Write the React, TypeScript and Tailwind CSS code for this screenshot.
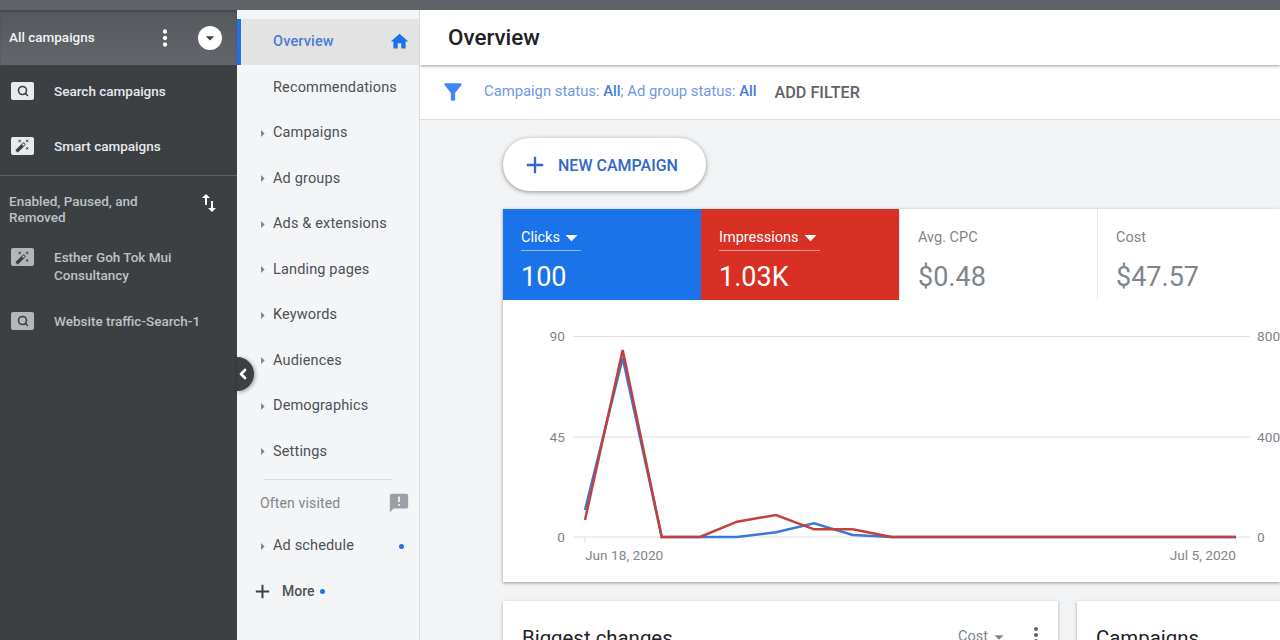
import {
  MdAutoFixHigh,
  MdHome,
  MdFilterAlt,
  MdAnnouncement,
  MdArrowDropDown,
  MdMoreVert,
  MdAdd,
  MdSwapVert,
  MdArrowRight,
} from "react-icons/md";
import { ChevronLeft, Search } from "lucide-react";

const navItems = [
  "Campaigns",
  "Ad groups",
  "Ads & extensions",
  "Landing pages",
  "Keywords",
  "Audiences",
  "Demographics",
  "Settings",
];

function TypeBadge({ wand, dim }: { wand?: boolean; dim?: boolean }) {
  return (
    <span
      className={`w-[23px] h-[18px] rounded-[2px] flex items-center justify-center shrink-0 text-[#3c4043] ${
        dim ? "bg-[#b4b6b9]" : "bg-[#e8eaed]"
      }`}
    >
      {wand ? <MdAutoFixHigh size={15} /> : <Search size={12} strokeWidth={3.2} />}
    </span>
  );
}

function CampaignRow({ label, wand, dim }: { label: string; wand?: boolean; dim?: boolean }) {
  return (
    <div className="h-[55px] flex items-center pl-[11px] gap-[20px] pb-[4px]">
      <TypeBadge wand={wand} dim={dim} />
      <span
        className={`text-[13.5px] leading-[18px] font-medium w-[150px] ${
          dim ? "text-[#bdc1c6]" : "text-[#e8eaed]"
        }`}
      >
        {label}
      </span>
    </div>
  );
}

function Sidebar() {
  return (
    <aside className="w-[237px] shrink-0 bg-[#3c4043]">
      <div className="h-[55px] bg-gradient-to-b from-[#55585d] to-[#63666b] flex items-center pl-[9px] pr-[15px] shadow-[inset_0_2px_2px_rgba(0,0,0,0.2)]">
        <span className="text-[13.5px] font-medium text-[#f1f3f4] flex-1">All campaigns</span>
        <MdMoreVert size={26} className="text-white mr-[20px]" />
        <span className="w-6 h-6 rounded-full bg-white flex items-center justify-center text-[#3c4043]">
          <MdArrowDropDown size={20} />
        </span>
      </div>
      <CampaignRow label="Search campaigns" />
      <CampaignRow label="Smart campaigns" wand />
      <div className="h-px bg-[#5f6368]" />
      <div className="flex justify-between pl-[9px] pr-[16px] pt-[17px]">
        <span className="text-[13.5px] leading-4 font-medium text-[#bdc1c6] w-[150px]">
          Enabled, Paused, and Removed
        </span>
        <MdSwapVert size={24} className="text-white -mt-[2px]" />
      </div>
      <div className="flex items-start pl-[11px] gap-[20px] mt-[23px]">
        <TypeBadge wand dim />
        <span className="text-[13.5px] leading-[18px] font-medium w-[150px] text-[#bdc1c6]">
          Esther Goh Tok Mui Consultancy
        </span>
      </div>
      <div className="mt-[11px]">
        <CampaignRow label="Website traffic-Search-1" dim />
      </div>
    </aside>
  );
}

function NavRow({ label, dot }: { label: string; dot?: boolean }) {
  return (
    <div className="h-[45.5px] flex items-center pl-[17px] pr-[15px] pt-[1px] text-[#4d5156]">
      <MdArrowRight size={17} className="text-[#80868b] mr-[2px] shrink-0" />
      <span className="text-[14.5px] tracking-[0.15px] flex-1">{label}</span>
      {dot && <span className="w-[5px] h-[5px] rounded-full bg-[#1a73e8]" />}
    </div>
  );
}

function NavColumn() {
  return (
    <nav className="w-[183px] shrink-0 bg-[#f4f5f6] border-r border-[#dadce0] pt-[9px]">
      <div className="h-[45.5px] bg-[#e3e3e3] border-l-[4px] border-[#1a73e8] flex items-center pl-[32px] pr-[9px]">
        <span className="text-[14.5px] tracking-[0.15px] font-medium text-[#4a7bd8] flex-1">Overview</span>
        <MdHome size={21} className="text-[#1a73e8]" />
      </div>
      <div className="h-[45.5px] flex items-center pl-[36px] pt-[1px] text-[14.5px] tracking-[0.15px] text-[#4d5156]">
        Recommendations
      </div>
      {navItems.map((item) => (
        <NavRow key={item} label={item} />
      ))}
      <div className="h-px bg-[#dadce0] mx-[27px] mt-[5px]" />
      <div className="flex items-center pl-[23px] pr-[9px] mt-[11px] h-[24px]">
        <span className="text-[14px] tracking-[0.15px] text-[#80868b] flex-1">Often visited</span>
        <MdAnnouncement size={22} className="text-[#9aa0a6]" />
      </div>
      <div className="mt-[8px]">
        <NavRow label="Ad schedule" dot />
      </div>
      <div className="h-[45px] flex items-center pl-[14px] text-[#3c4043]">
        <MdAdd size={23} className="mr-[8px]" />
        <span className="text-[14px] font-medium text-[#4d5156]">More</span>
        <span className="w-[5px] h-[5px] rounded-full bg-[#1a73e8] ml-[5px]" />
      </div>
    </nav>
  );
}

function ScoreCard({
  label,
  value,
  color,
}: {
  label: string;
  value: string;
  color?: string;
}) {
  if (color) {
    return (
      <div className={`w-[198px] h-[91px] shrink-0 pl-[18px] pt-[16px] text-white ${color}`}>
        <div className="inline-flex items-center h-[20px] border-b border-white/50 text-[14.5px] pb-[2px] box-content">
          {label}
          <MdArrowDropDown size={29} className="-my-1 -mr-[5px] -ml-[3px]" />
        </div>
        <div className="text-[27px] leading-[32px] mt-[10px]">{value}</div>
      </div>
    );
  }
  return (
    <div className="w-[198px] h-[91px] shrink-0 pl-[18px] pt-[18px] bg-white border-l border-[#e8eaed]">
      <div className="h-[20px] text-[14.5px] text-[#80868b]">{label}</div>
      <div className="text-[27px] leading-[32px] mt-[14px] text-[#80868b]">{value}</div>
    </div>
  );
}

function Chart() {
  const blue =
    "585,510 622.7,358 661.7,537 737,537 776,532.3 814,523.3 852.7,535 891.7,537 1236,537";
  const red =
    "585,520 622.7,350 661.7,537 700,537 737,521.7 776,515 814,529.3 852.7,529.3 891.7,537 1236,537";
  return (
    <svg width="777" height="282" viewBox="503 300 777 282" className="block">
      {[336.5, 437, 537].map((y) => (
        <line key={y} x1="573" x2="1250" y1={y} y2={y} stroke="#e0e0e0" strokeWidth="1" />
      ))}
      <line x1="585" x2="585" y1="537" y2="543" stroke="#e0e0e0" />
      <line x1="1236" x2="1236" y1="537" y2="543" stroke="#e0e0e0" />
      <g fontFamily="Roboto, sans-serif" fontSize="13.7" fill="#80868b">
        <text x="565" y="341" textAnchor="end">90</text>
        <text x="565" y="441.5" textAnchor="end">45</text>
        <text x="565" y="541.5" textAnchor="end">0</text>
        <text x="1257" y="341">800</text>
        <text x="1257" y="441.5">400</text>
        <text x="1257" y="541.5">0</text>
        <text x="585" y="560">Jun 18, 2020</text>
        <text x="1236" y="560" textAnchor="end">Jul 5, 2020</text>
      </g>
      <polyline points={blue} fill="none" stroke="#3b78d8" strokeWidth="2.5" />
      <polyline points={red} fill="none" stroke="#c0423a" strokeWidth="2.5" />
    </svg>
  );
}

function Main() {
  return (
    <main className="flex-1 min-w-0 bg-[#f1f3f4] overflow-hidden">
      <div className="h-[55px] bg-white flex items-center pl-[28px] shadow-[0_1px_3px_rgba(60,64,67,0.5)] relative">
        <h1 className="text-[22.4px] font-medium text-[#202124]">Overview</h1>
      </div>
      <div className="h-[55px] bg-white border-b border-[#e0e0e0] flex items-center pl-[21px]">
        <MdFilterAlt size={26} className="text-[#4285f4] -ml-[1px]" />
        <span className="ml-[18px] pb-[1px] text-[14.8px] text-[#6f97e6]">
          Campaign status: <b className="font-medium text-[#4a7bd8]">All</b>; Ad group status:{" "}
          <b className="font-medium text-[#4a7bd8]">All</b>
        </span>
        <span className="ml-[18px] pt-[2px] text-[16.2px] font-medium text-[#5f6368]">ADD FILTER</span>
      </div>
      <div className="pl-[83px] pt-[18px]">
        <button className="w-[203px] h-[53px] rounded-full bg-white shadow-[0_1px_4px_rgba(60,64,67,0.55)] flex items-center pl-[18px] text-[#3367c5]">
          <MdAdd size={28} />
          <span className="ml-[9px] pt-[2px] text-[16px] font-medium">NEW CAMPAIGN</span>
        </button>
        <section className="w-[777px] mt-[18px] bg-white shadow-[0_1px_3px_rgba(60,64,67,0.5)]">
          <div className="flex">
            <ScoreCard label="Clicks" value="100" color="bg-[#1a73e8]" />
            <ScoreCard label="Impressions" value="1.03K" color="bg-[#d93025]" />
            <ScoreCard label="Avg. CPC" value="$0.48" />
            <ScoreCard label="Cost" value="$47.57" />
          </div>
          <Chart />
        </section>
        <div className="flex gap-[19px] mt-[19px]">
          <section className="w-[555px] shrink-0 h-[120px] bg-white shadow-[0_1px_3px_rgba(60,64,67,0.4)] flex items-start pl-[19px] pr-[10px] pt-[22px]">
            <h2 className="text-[20.4px] text-[#202124] flex-1">Biggest changes</h2>
            <span className="text-[14.5px] text-[#80868b] flex items-center mt-[3px]">
              Cost
              <MdArrowDropDown size={22} className="-my-1" />
            </span>
            <MdMoreVert size={24} className="text-[#5f6368] ml-[14px]" />
          </section>
          <section className="w-[300px] shrink-0 h-[120px] bg-white shadow-[0_1px_3px_rgba(60,64,67,0.4)] pl-[19px] pt-[22px]">
            <h2 className="text-[20.4px] text-[#202124]">Campaigns</h2>
          </section>
        </div>
      </div>
    </main>
  );
}

export default function App() {
  return (
    <div className="w-[1280px] h-[640px] overflow-hidden relative font-['Roboto',sans-serif] bg-white">
      <div className="h-[10px] bg-[#5f6368]" />
      <div className="flex h-[630px]">
        <Sidebar />
        <NavColumn />
        <Main />
      </div>
      {/* collapse handle over the sidebar edge */}
      <button className="absolute left-[237px] top-[357px] w-[17px] h-[34px] rounded-r-full bg-[#3c4043] shadow-[1px_1px_4px_rgba(0,0,0,0.4)] flex items-center justify-center text-white">
        <ChevronLeft size={16} strokeWidth={4} className="shrink-0 -ml-[6px]" />
      </button>
    </div>
  );
}
